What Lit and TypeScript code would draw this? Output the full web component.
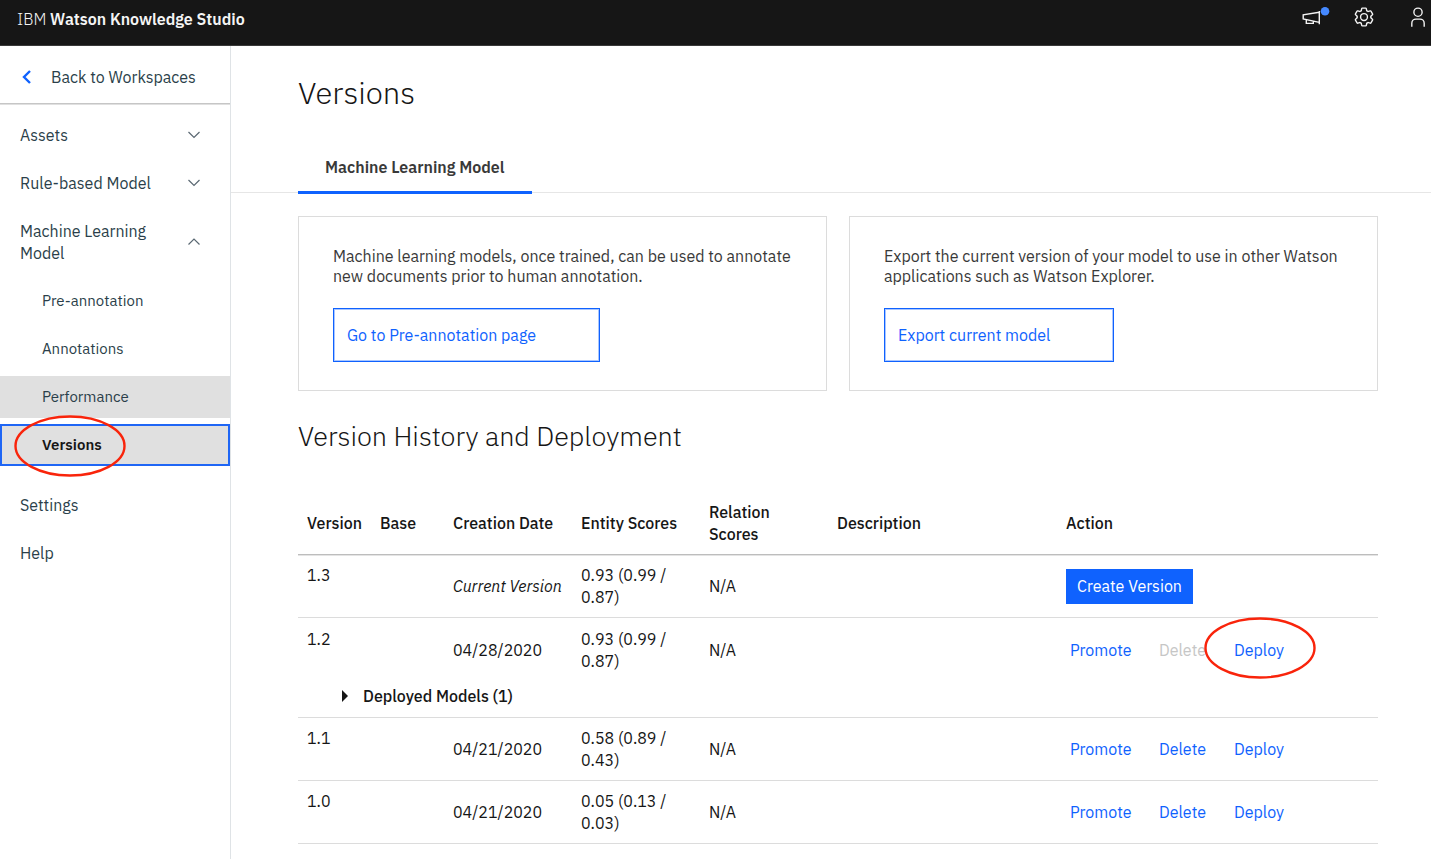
import { LitElement, html, css, nothing } from "lit";
import { customElement, property } from "lit/decorators.js";

interface VersionRow {
  version: string;
  date: string;
  entity: string;
  relation: string;
  current?: boolean;
  deleteDisabled?: boolean;
  circled?: boolean;
  deployed?: number;
}

const VERSIONS: VersionRow[] = [
  { version: "1.3", date: "Current Version", entity: "0.93 (0.99 / 0.87)", relation: "N/A", current: true },
  { version: "1.2", date: "04/28/2020", entity: "0.93 (0.99 / 0.87)", relation: "N/A", deleteDisabled: true, circled: true, deployed: 1 },
  { version: "1.1", date: "04/21/2020", entity: "0.58 (0.89 / 0.43)", relation: "N/A" },
  { version: "1.0", date: "04/21/2020", entity: "0.05 (0.13 / 0.03)", relation: "N/A" },
];

const base = css`
  * { box-sizing: border-box; }
  h1, h2, p, ul { margin: 0; padding: 0; }
  ul { list-style: none; }
  a { color: inherit; text-decoration: none; }
  button { font: inherit; border: 0; padding: 0; background: none; cursor: pointer; text-align: left; }
  svg { display: block; }
`;

@customElement("marker-ring")
export class MarkerRing extends LitElement {
  static styles = css`
    :host { position: absolute; pointer-events: none; width: 112px; height: 62px; z-index: 1; }
    svg { display: block; overflow: visible; }
  `;
  render() {
    return html`<svg width="112" height="62" viewBox="0 0 112 62" aria-hidden="true">
      <ellipse cx="56" cy="31" rx="54.500" ry="29.500" fill="none" stroke="#f9240b" stroke-width="2.400" />
    </svg>`;
  }
}

@customElement("top-bar")
export class TopBar extends LitElement {
  static styles = [base, css`
    :host { display: block; background: #161616; border-bottom: 1px solid #393939; color: #f4f4f4; }
    .bar { display: flex; align-items: flex-start; justify-content: space-between; height: 45px; padding: 6px 2px 0 17px; }
    .brand { font-size: 16px; line-height: 26px; font-weight: 600; }
    .thin { font-weight: 300; }
    .tools { display: flex; align-items: center; gap: 32px; }
    .tools button { color: #f4f4f4; }
    .news { margin-right: -10px; }
  `];
  render() {
    return html`<header class="bar">
      <a class="brand" href="#"><span class="thin">IBM</span> Watson Knowledge Studio</a>
      <div class="tools">
        <button class="news" aria-label="Announcements">
          <svg width="30" height="22" viewBox="0 0 30 22" fill="none" stroke="currentColor" stroke-width="1.400">
            <path d="M18.300 5V18.200M18.300 6.200L2.200 8.800V13L18.300 16.400M5.300 14V17.400H12.300V15.500" />
            <circle cx="24" cy="5.300" r="4.300" fill="#4589ff" stroke="none" />
          </svg>
        </button>
        <button aria-label="Settings">
          <svg width="22" height="22" viewBox="0 0 32 32" fill="currentColor">
            <path d="M27,16.76c0-.25,0-.5,0-.76s0-.51,0-.77l1.92-1.68A2,2,0,0,0,29.3,11L26.94,7a2,2,0,0,0-1.73-1,2,2,0,0,0-.64.1l-2.43.82a11.35,11.35,0,0,0-1.31-.75l-.51-2.52a2,2,0,0,0-2-1.61H13.64a2,2,0,0,0-2,1.61l-.51,2.52a11.48,11.48,0,0,0-1.32.75L7.43,6.06A2,2,0,0,0,6.79,6,2,2,0,0,0,5.06,7L2.7,11a2,2,0,0,0,.41,2.51L5,15.24c0,.25,0,.5,0,.76s0,.51,0,.77L3.11,18.45A2,2,0,0,0,2.7,21L5.06,25a2,2,0,0,0,1.73,1,2,2,0,0,0,.64-.1l2.43-.82a11.35,11.35,0,0,0,1.31.75l.51,2.52a2,2,0,0,0,2,1.61h4.72a2,2,0,0,0,2-1.61l.51-2.52a11.48,11.48,0,0,0,1.32-.75l2.42.82a2,2,0,0,0,.64.1,2,2,0,0,0,1.73-1L29.3,21a2,2,0,0,0-.41-2.51ZM25.21,24l-3.43-1.16a8.86,8.86,0,0,1-2.71,1.57L18.36,28H13.64l-.71-3.55a9.36,9.36,0,0,1-2.7-1.57L6.79,24,4.43,20l2.72-2.4a8.9,8.9,0,0,1,0-3.13L4.43,12,6.79,8l3.43,1.16a8.86,8.86,0,0,1,2.71-1.57L13.64,4h4.72l.71,3.55a9.36,9.36,0,0,1,2.7,1.57L25.21,8,27.57,12l-2.72,2.4a8.9,8.9,0,0,1,0,3.13L27.57,20Z" />
            <path d="M16,22a6,6,0,1,1,6-6A5.94,5.94,0,0,1,16,22Zm0-10a4,4,0,1,0,4,4A3.91,3.91,0,0,0,16,12Z" />
          </svg>
        </button>
        <button aria-label="Account">
          <svg width="22" height="22" viewBox="0 0 32 32" fill="currentColor">
            <path d="M16 4a5 5 0 1 1-5 5 5 5 0 0 1 5-5m0-2a7 7 0 1 0 7 7A7 7 0 0 0 16 2ZM26 30H24V25a5 5 0 0 0-5-5H13a5 5 0 0 0-5 5v5H6V25a7 7 0 0 1 7-7h6a7 7 0 0 1 7 7Z" />
          </svg>
        </button>
      </div>
    </header>`;
  }
}

@customElement("side-nav")
export class SideNav extends LitElement {
  static styles = [base, css`
    :host { display: block; flex: 0 0 231px; border-right: 1px solid #dfe3e6; color: #2b3f4a; font-size: 16px; line-height: 22px; }
    .back { display: flex; align-items: center; gap: 20px; padding: 20px 20px 15px 22px; border-bottom: 1px solid #c6c6c6; box-shadow: 0 1px 0 #e0e0e0; }
    .menu { display: flex; flex-direction: column; gap: 6px; padding-top: 10px; }
    .item { position: relative; display: flex; align-items: center; justify-content: space-between; width: 100%; padding: 10px 29px 10px 20px; color: inherit; }
    .label { max-width: 140px; }
    .sub { padding-left: 42px; font-size: 15px; }
    .hovered { background: #e0e0e0; }
    .active { background: #e0e0e0; color: #161616; font-weight: 600; outline: 2px solid #1f66f5; outline-offset: -2px; }
    .after { margin-top: 12px; }
    .ring { left: 14px; top: -9px; }
  `];
  private chevron(up: boolean) {
    return html`<svg width="14" height="14" viewBox="0 0 14 14" fill="none" stroke="#5a6872" stroke-width="1.200" aria-hidden="true">
      <path d=${up ? "M1.500 9.500L7 4L12.500 9.500" : "M1.500 4L7 9.500L12.500 4"} />
    </svg>`;
  }
  render() {
    return html`<nav aria-label="Workspace">
      <a class="back" href="#">
        <svg width="9" height="14" viewBox="0 0 9 14" fill="none" stroke="#0f62fe" stroke-width="2.400"><path d="M8 1L2 7L8 13" /></svg>
        <span>Back to Workspaces</span>
      </a>
      <ul class="menu">
        <li><button class="item"><span class="label">Assets</span>${this.chevron(false)}</button></li>
        <li><button class="item"><span class="label">Rule-based Model</span>${this.chevron(false)}</button></li>
        <li><button class="item" aria-expanded="true"><span class="label">Machine Learning Model</span>${this.chevron(true)}</button></li>
        <li><a class="item sub" href="#">Pre-annotation</a></li>
        <li><a class="item sub" href="#">Annotations</a></li>
        <li><a class="item sub hovered" href="#">Performance</a></li>
        <li><a class="item sub active" href="#" aria-current="page">Versions<marker-ring class="ring"></marker-ring></a></li>
        <li class="after"><a class="item" href="#">Settings</a></li>
        <li><a class="item" href="#">Help</a></li>
      </ul>
    </nav>`;
  }
}

@customElement("action-card")
export class ActionCard extends LitElement {
  @property() text = "";
  @property() action = "";
  static styles = [base, css`
    :host { display: block; flex: 1 1 0; border: 1px solid #dcdcdc; padding: 29px 34px 28px; }
    .text { color: #393939; font-size: 16px; line-height: 20px; margin-bottom: 22px; }
    .button { border: 1px solid #0f62fe; box-shadow: 0 0 0 1px #a9c6ff inset; color: #0f62fe; font-size: 16px; line-height: 22px; padding: 15px 63px 15px 13px; }
  `];
  render() {
    return html`<p class="text">${this.text}</p><button class="button">${this.action}</button>`;
  }
}

@customElement("version-table")
export class VersionTable extends LitElement {
  static styles = [base, css`
    :host { display: block; font-size: 16px; line-height: 22px; color: #161616; }
    table { width: 100%; table-layout: fixed; border-collapse: separate; border-spacing: 0; }
    .narrow { width: 73px; }
    .medium { width: 128px; }
    .wide { width: 229px; }
    th { text-align: left; font-weight: 500; padding: 9px; border-bottom: 1px solid #bdbdbd; box-shadow: 0 1px 0 #e4e4e4; }
    td { padding: 9px; border-bottom: 1px solid #dcdcdc; vertical-align: middle; }
    .top { vertical-align: top; }
    .open { padding-top: 10px; border-bottom: 0; }
    .current { font-style: italic; white-space: nowrap; padding-right: 0; }
    .create { background: #0f62fe; color: #fff; padding: 6px 11px; height: 35px; }
    .tight { padding-top: 0; padding-bottom: 0; }
    .actions { display: grid; grid-template-columns: 89px 75px auto; padding-left: 4px; justify-content: start; }
    .link { position: relative; color: #0f62fe; }
    .link:disabled { color: #c6c6c6; }
    .ring { left: -30px; top: -22px; }
    .details { padding: 4px 9px 10px 44px; }
    .toggle { display: flex; align-items: center; gap: 15px; font-weight: 500; color: #161616; }
  `];
  private row(v: VersionRow) {
    const open = v.deployed ? "open" : "";
    return html`<tr>
        <td class="top ${open}">${v.version}</td>
        <td class=${open}></td>
        <td class="${open} ${v.current ? "current" : ""}">${v.date}</td>
        <td class=${open}>${v.entity}</td>
        <td class=${open}>${v.relation}</td>
        <td class=${open}></td>
        <td class="${open} tight">
          ${v.current
            ? html`<button class="create">Create Version</button>`
            : html`<div class="actions">
                <button class="link">Promote</button>
                <button class="link" ?disabled=${v.deleteDisabled}>Delete</button>
                <button class="link">Deploy${v.circled ? html`<marker-ring class="ring"></marker-ring>` : nothing}</button>
              </div>`}
        </td>
      </tr>
      ${v.deployed
        ? html`<tr><td class="details" colspan="7">
            <button class="toggle" aria-expanded="false">
              <svg width="6" height="12" viewBox="0 0 6 12" fill="#161616"><path d="M0 0L6 6L0 12Z" /></svg>
              Deployed Models (${v.deployed})
            </button></td></tr>`
        : nothing}`;
  }
  render() {
    return html`<table>
      <colgroup>
        <col class="narrow" /><col class="narrow" /><col class="medium" /><col class="medium" /><col class="medium" /><col class="wide" /><col />
      </colgroup>
      <thead><tr>
        <th>Version</th><th>Base</th><th>Creation Date</th><th>Entity Scores</th><th>Relation Scores</th><th>Description</th><th>Action</th>
      </tr></thead>
      <tbody>${VERSIONS.map((v) => this.row(v))}</tbody>
    </table>`;
  }
}

@customElement("app-root")
export class AppRoot extends LitElement {
  static styles = [base, css`
    :host { display: flex; flex-direction: column; min-height: 100vh; background: #fff; font-family: "IBM Plex Sans", "Noto Sans", sans-serif; color: #161616; }
    .body { display: flex; flex: 1; }
    .main { flex: 1; min-width: 0; padding-top: 27px; }
    .title { font-size: 31px; line-height: 40px; font-weight: 300; padding-left: 67px; }
    .tabs { display: flex; margin-top: 30px; padding-left: 67px; border-bottom: 1px solid #e6e6e6; }
    .tab { margin-bottom: -2px; border-bottom: 3px solid #0f62fe; padding: 14px 27px; color: #393939; font-size: 16px; line-height: 20px; font-weight: 600; }
    .content { padding: 23px 53px 0 67px; }
    .cards { display: flex; gap: 22px; }
    .subtitle { font-size: 27px; line-height: 36px; font-weight: 300; margin: 27px 0 38px; }
  `];
  render() {
    return html`<top-bar></top-bar>
      <div class="body">
        <side-nav></side-nav>
        <main class="main">
          <h1 class="title">Versions</h1>
          <div class="tabs" role="tablist"><button class="tab" role="tab" aria-selected="true">Machine Learning Model</button></div>
          <div class="content">
            <div class="cards">
              <action-card text="Machine learning models, once trained, can be used to annotate new documents prior to human annotation." action="Go to Pre-annotation page"></action-card>
              <action-card text="Export the current version of your model to use in other Watson applications such as Watson Explorer." action="Export current model"></action-card>
            </div>
            <h2 class="subtitle">Version History and Deployment</h2>
            <version-table></version-table>
          </div>
        </main>
      </div>`;
  }
}
